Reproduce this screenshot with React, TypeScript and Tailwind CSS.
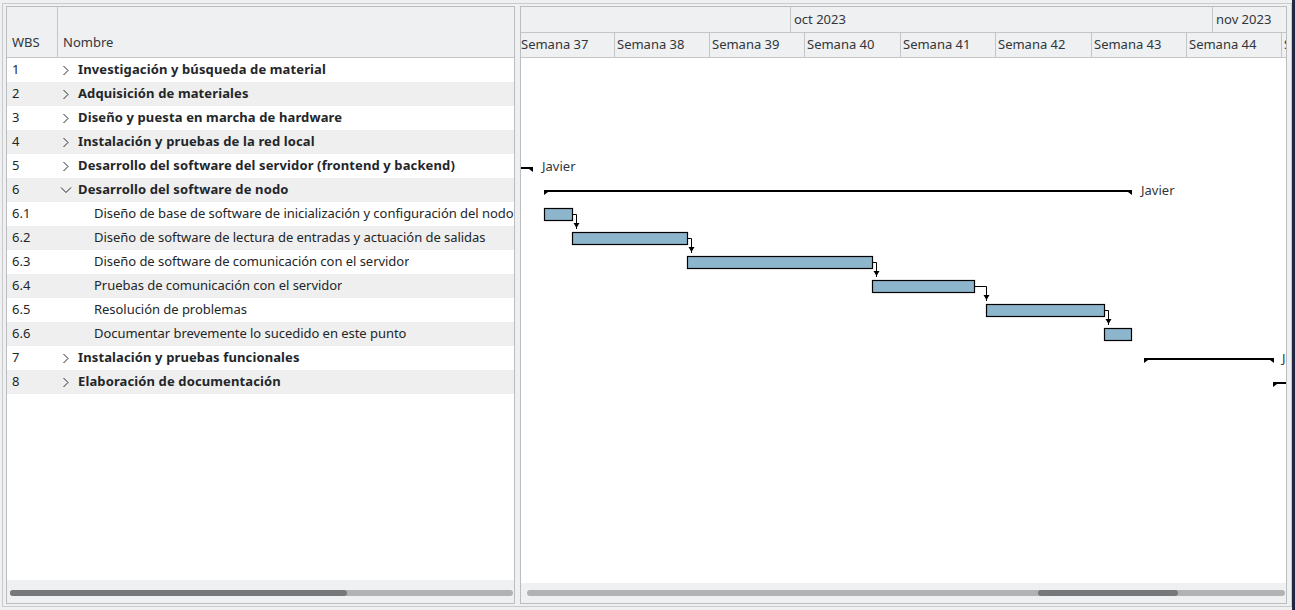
import React from "react";

type Row = { wbs: string; name: string; level: 0 | 1; chev?: "right" | "down" };

const rows: Row[] = [
  { wbs: "1", name: "Investigación y búsqueda de material", level: 0, chev: "right" },
  { wbs: "2", name: "Adquisición de materiales", level: 0, chev: "right" },
  { wbs: "3", name: "Diseño y puesta en marcha de hardware", level: 0, chev: "right" },
  { wbs: "4", name: "Instalación y pruebas de la red local", level: 0, chev: "right" },
  { wbs: "5", name: "Desarrollo del software del servidor (frontend y backend)", level: 0, chev: "right" },
  { wbs: "6", name: "Desarrollo del software de nodo", level: 0, chev: "down" },
  { wbs: "6.1", name: "Diseño de base de software de inicialización y configuración del nodo", level: 1 },
  { wbs: "6.2", name: "Diseño de software de lectura de entradas y actuación de salidas", level: 1 },
  { wbs: "6.3", name: "Diseño de software de comunicación con el servidor", level: 1 },
  { wbs: "6.4", name: "Pruebas de comunicación con el servidor", level: 1 },
  { wbs: "6.5", name: "Resolución de problemas", level: 1 },
  { wbs: "6.6", name: "Documentar brevemente lo sucedido en este punto", level: 1 },
  { wbs: "7", name: "Instalación y pruebas funcionales", level: 0, chev: "right" },
  { wbs: "8", name: "Elaboración de documentación", level: 0, chev: "right" },
];

const weeks = [
  { label: "Semana 37", w: "w-[94px]", pl: "pl-0" },
  { label: "Semana 38", w: "w-[95px]", pl: "pl-[2px]" },
  { label: "Semana 39", w: "w-[95px]", pl: "pl-[2px]" },
  { label: "Semana 40", w: "w-[96px]", pl: "pl-[2px]" },
  { label: "Semana 41", w: "w-[95px]", pl: "pl-[2px]" },
  { label: "Semana 42", w: "w-[96px]", pl: "pl-[2px]" },
  { label: "Semana 43", w: "w-[95px]", pl: "pl-[2px]" },
  { label: "Semana 44", w: "w-[95px]", pl: "pl-[2px]" },
  { label: "Semana 45", w: "w-[95px]", pl: "pl-[2px]" },
];

// chart coordinates relative to body origin (521, 58)
const OX = 521;
const OY = 58;
const bars = [
  { x1: 544, x2: 573, i: 6 },
  { x1: 572, x2: 688, i: 7 },
  { x1: 687, x2: 873, i: 8 },
  { x1: 872, x2: 975, i: 9 },
  { x1: 986, x2: 1105, i: 10 },
  { x1: 1104, x2: 1132, i: 11 },
];
const arrows = [
  { from: 0, ax: 576 },
  { from: 1, ax: 691 },
  { from: 2, ax: 876 },
  { from: 3, ax: 986 },
  { from: 4, ax: 1108 },
];

function ChevRight() {
  return (
    <svg width="8" height="11" viewBox="0 0 8 11" className="block">
      <polyline points="1.5,1 6,5.5 1.5,10" fill="none" stroke="#232629" strokeWidth="1" />
    </svg>
  );
}
function ChevDown() {
  return (
    <svg width="12" height="8" viewBox="0 0 12 8" className="block">
      <polyline points="1,1.5 6,6.5 11,1.5" fill="none" stroke="#232629" strokeWidth="1" />
    </svg>
  );
}

function Summary({ x1, x2, cy, left, right }: { x1: number; x2: number; cy: number; left: boolean; right: boolean }) {
  const X1 = x1 - OX;
  const X2 = x2 - OX;
  const Y = cy - OY;
  return (
    <g fill="#000">
      <rect x={X1} y={Y} width={X2 - X1} height={2} />
      {left && <polygon points={`${X1},${Y + 2} ${X1 + 4},${Y + 2} ${X1},${Y + 5}`} />}
      {right && <polygon points={`${X2},${Y + 2} ${X2 - 4},${Y + 2} ${X2},${Y + 5}`} />}
    </g>
  );
}

export default function App() {
  const font = { fontFamily: '"Noto Sans", "Open Sans", sans-serif' };
  return (
    <div className="w-[1295px] h-[610px] bg-[#eff0f1] flex overflow-hidden text-[13px]" style={font}>
      <div className="w-[1290px] ml-[2px] mt-[3px] h-[604px] border border-[#c9cacb] pl-[3px] pt-[2px] flex">
        {/* Left panel */}
        <div className="w-[509px] h-[598px] border border-[#bcbdbe] flex flex-col bg-white">
          <div className="h-[51px] flex border-b border-[#c4c5c6] bg-[#eff0f1] text-[#31363b]">
            <div className="w-[51px] border-r border-[#c4c5c6] pl-[5px] flex items-end pb-[5px]">WBS</div>
            <div className="flex-1 pl-[5px] flex items-end pb-[5px]">Nombre</div>
          </div>
          <div className="flex-1 text-[#232629]">
            {rows.map((r, idx) => (
              <div key={r.wbs} className={`h-[24px] flex items-center ${idx % 2 === 1 ? "bg-[#efefef]" : "bg-white"}`}>
                <div className="w-[51px] pl-[5px] shrink-0">{r.wbs}</div>
                {r.level === 0 ? (
                  <div className="flex items-center whitespace-nowrap overflow-hidden">
                    {r.chev === "down" ? (
                      <span className="w-[20px] pl-[2px] shrink-0">
                        <ChevDown />
                      </span>
                    ) : (
                      <span className="w-[20px] pl-[4px] shrink-0">
                        <ChevRight />
                      </span>
                    )}
                    <span className="font-bold tracking-[0.12px]">{r.name}</span>
                  </div>
                ) : (
                  <div className="pl-[36px] whitespace-nowrap overflow-hidden tracking-[-0.04px]">{r.name}</div>
                )}
              </div>
            ))}
          </div>
          <div className="h-[23px] bg-[#eff0f1] pt-[10px] pl-[3px] pr-[1px] shrink-0">
            <div className="h-[6px] rounded-full bg-[#b1b2b3] relative">
              <div className="h-[6px] w-[337px] rounded-full bg-[#77787b]" />
            </div>
          </div>
        </div>

        {/* splitter */}
        <div className="w-[5px] shrink-0" />

        {/* Right panel */}
        <div className="w-[767px] h-[598px] border border-[#bcbdbe] flex flex-col bg-white overflow-hidden">
          <div className="h-[51px] bg-[#eff0f1] text-[#31363b] border-b border-[#c4c5c6] flex flex-col overflow-hidden">
            <div className="h-[26px] flex border-b border-[#c4c5c6] whitespace-nowrap">
              <div className="w-[270px] border-r border-[#c4c5c6] shrink-0" />
              <div className="w-[422px] border-r border-[#c4c5c6] pl-[3px] flex items-center shrink-0">oct 2023</div>
              <div className="flex-1 pl-[3px] flex items-center">nov 2023</div>
            </div>
            <div className="h-[24px] flex whitespace-nowrap">
              {weeks.map((w) => (
                <div key={w.label} className={`${w.w} ${w.pl} border-r border-[#c4c5c6] flex items-center shrink-0 overflow-hidden`}>
                  {w.label}
                </div>
              ))}
            </div>
          </div>
          <div className="flex-1 bg-white overflow-hidden">
            <svg width="765" height="525" className="block">
              {/* row 5 */}
              <Summary x1={521} x2={533} cy={167} left={false} right={true} />
              <text x={542 - OX} y={166 - OY + 4.5} fontSize="13" fill="#31363b" style={font}>Javier</text>
              {/* row 6 */}
              <Summary x1={544} x2={1132} cy={190} left={true} right={true} />
              <text x={1141 - OX} y={190 - OY + 4.5} fontSize="13" fill="#31363b" style={font}>Javier</text>
              {/* tasks */}
              {bars.map((b, k) => {
                const top = 24 * b.i + 6;
                return (
                  <rect
                    key={k}
                    x={b.x1 - OX + 0.5}
                    y={top + 0.5}
                    width={b.x2 - b.x1 - 1}
                    height={12}
                    fill="#8db5cc"
                    stroke="#000"
                    strokeWidth={1.2}
                  />
                );
              })}
              {arrows.map((a, k) => {
                const b = bars[a.from];
                const cy = 24 * b.i + 12 + 0.5;
                const ax = a.ax - OX + 0.5;
                const startX = b.x2 - OX;
                const endY = 24 * (b.i + 1) + 3;
                return (
                  <g key={k}>
                    <path d={`M${startX},${cy} H${ax} V${endY}`} fill="none" stroke="#000" strokeWidth={1} />
                    <polygon points={`${ax - 3},${endY - 6} ${ax + 3},${endY - 6} ${ax},${endY - 1}`} fill="#000" />
                  </g>
                );
              })}
              {/* row 7 */}
              <Summary x1={1144} x2={1274} cy={358} left={true} right={true} />
              <text x={1282 - OX} y={358 - OY + 4.5} fontSize="13" fill="#31363b" style={font}>Javier</text>
              {/* row 8 */}
              <Summary x1={1273} x2={1300} cy={382} left={true} right={false} />
            </svg>
          </div>
          <div className="h-[20px] bg-[#eff0f1] pt-[7px] pl-[6px] pr-[1px] shrink-0">
            <div className="h-[6px] rounded-full bg-[#b1b2b3] flex">
              <div className="w-[511px] shrink-0" />
              <div className="h-[6px] w-[140px] rounded-full bg-[#77787b]" />
            </div>
          </div>
        </div>
      </div>
      <div className="w-[3px] h-full bg-[#232640] shrink-0" />
    </div>
  );
}
